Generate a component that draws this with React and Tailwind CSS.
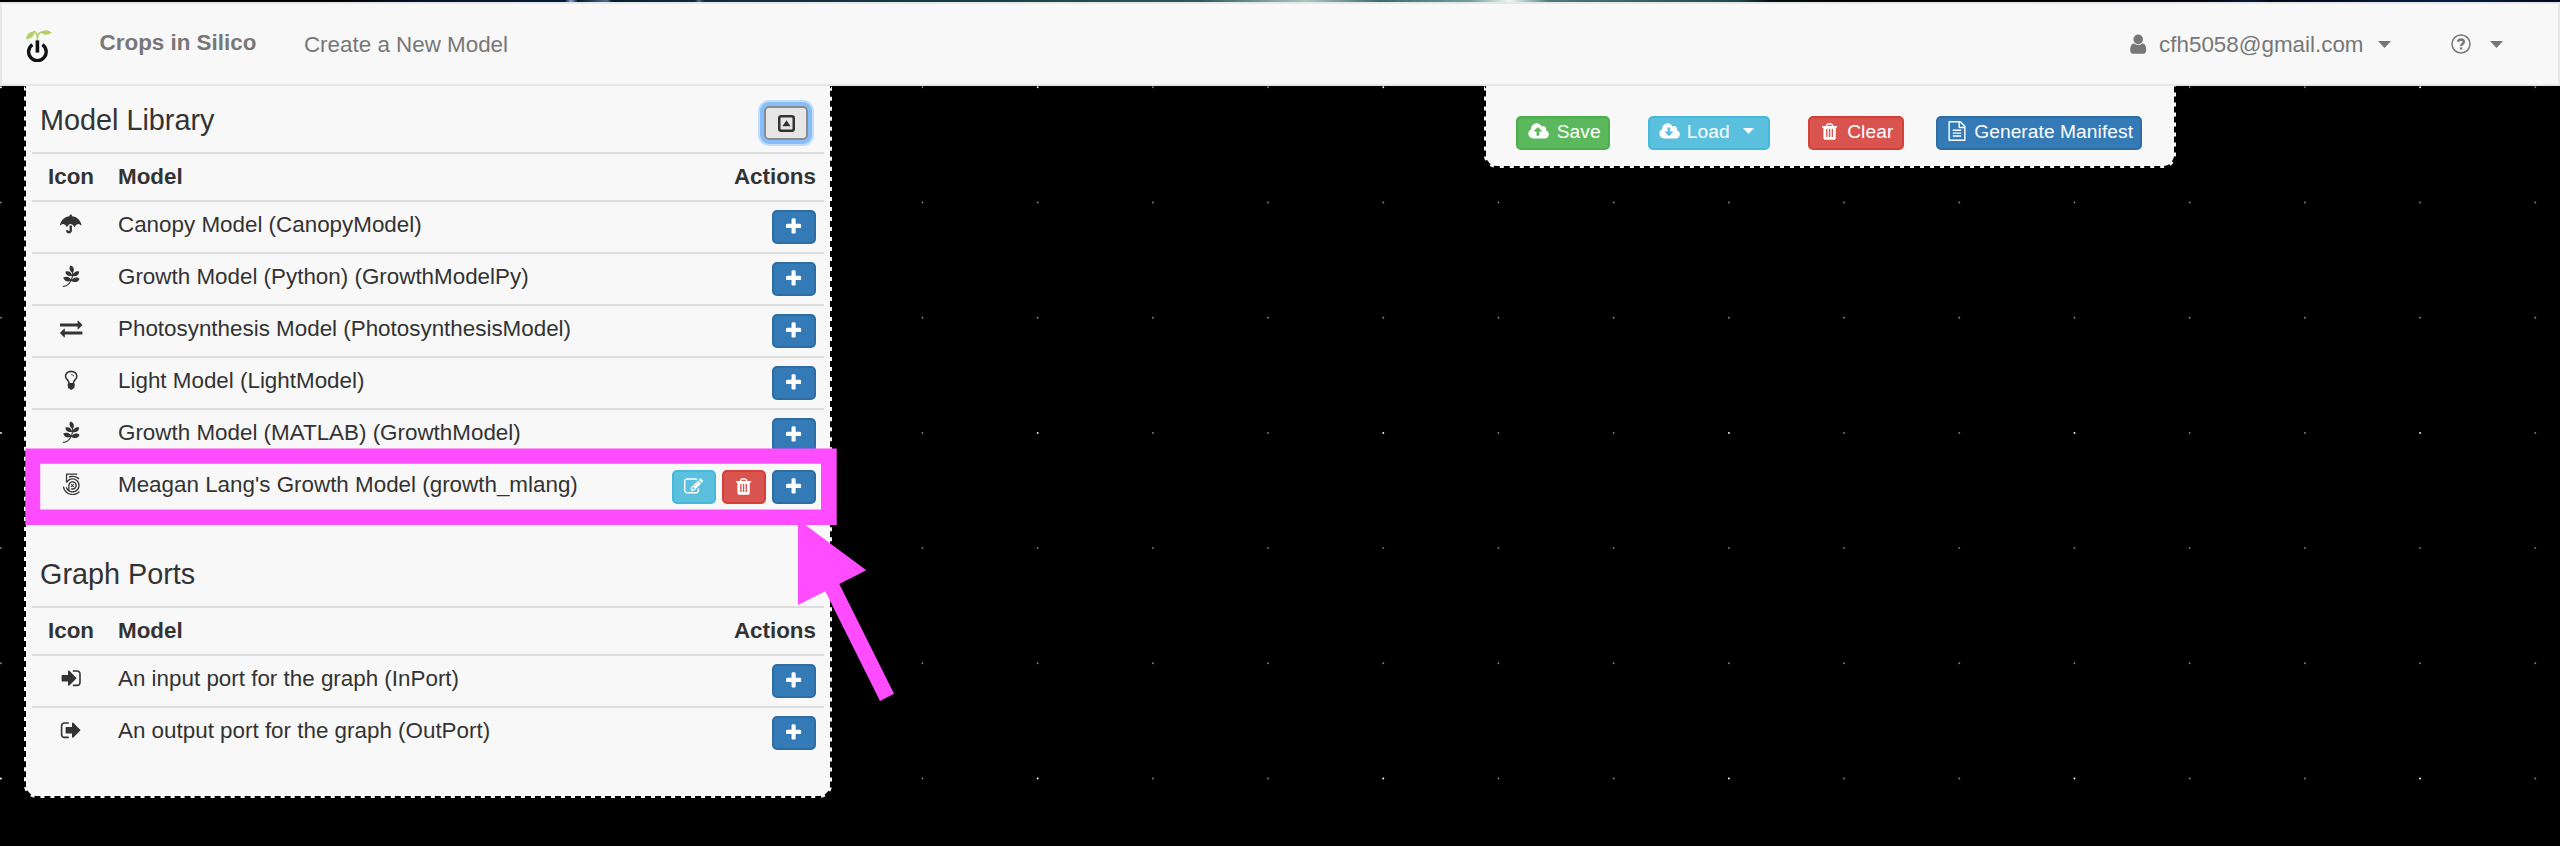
import { Fa500Px, FaPagelines, FaUmbrella } from "react-icons/fa";

const PATHS = {
  plus: "M1600 736v192q0 40-28 68t-68 28h-416v416q0 40-28 68t-68 28h-192q-40 0-68-28t-28-68v-416h-416q-40 0-68-28t-28-68v-192q0-40 28-68t68-28h416v-416q0-40 28-68t68-28h192q40 0 68 28t28 68v416h416q40 0 68 28t28 68z",
  trash: "M704 1376v-704q0-14-9-23t-23-9h-64q-14 0-23 9t-9 23v704q0 14 9 23t23 9h64q14 0 23-9t9-23zm256 0v-704q0-14-9-23t-23-9h-64q-14 0-23 9t-9 23v704q0 14 9 23t23 9h64q14 0 23-9t9-23zm256 0v-704q0-14-9-23t-23-9h-64q-14 0-23 9t-9 23v704q0 14 9 23t23 9h64q14 0 23-9t9-23zm-544-992h448l-48-117q-7-9-17-11h-317q-10 2-17 11zm928 32v64q0 14-9 23t-23 9h-96v948q0 83-47 143.5t-113 60.5h-832q-66 0-113-58.5t-47-141.5v-952h-96q-14 0-23-9t-9-23v-64q0-14 9-23t23-9h309l70-167q15-37 54-63t79-26h320q40 0 79 26t54 63l70 167h309q14 0 23 9t9 23z",
  user: "M1536 1399q0 109-62.5 187t-150.5 78h-854q-88 0-150.5-78t-62.5-187q0-85 8.5-160.5t31.5-152 58.5-131 94-89 134.5-34.5q131 128 313 128t313-128q76 0 134.5 34.5t94 89 58.5 131 31.5 152 8.5 160.5zm-256-887q0 159-112.5 271.5t-271.5 112.5-271.5-112.5-112.5-271.5 112.5-271.5 271.5-112.5 271.5 112.5 112.5 271.5z",
  edit: "M888 1184l116-116-152-152-116 116v56h96v96h56zm440-720q-16-16-33 1l-350 350q-17 17-1 33t33-1l350-350q17-17 1-33zm80 594v190q0 119-84.5 203.5t-203.5 84.5h-832q-119 0-203.5-84.5t-84.5-203.5v-832q0-119 84.5-203.5t203.5-84.5h832q63 0 117 25 15 7 18 23 3 17-9 29l-49 49q-14 14-32 8-23-6-45-6h-832q-66 0-113 47t-47 113v832q0 66 47 113t113 47h832q66 0 113-47t47-113v-126q0-13 9-22l64-64q15-15 35-7t20 29zm-96-738l288 288-672 672h-288v-288zm444 132l-92 92-288-288 92-92q28-28 68-28t68 28l152 152q28 28 28 68t-28 68z",
  file: "M1596 380q28 28 48 76t20 88v1152q0 40-28 68t-68 28h-1344q-40 0-68-28t-28-68v-1600q0-40 28-68t68-28h896q40 0 88 20t76 48zm-444-244v376h376q-10-29-22-41l-313-313q-12-12-41-22zm384 1528v-1024h-416q-40 0-68-28t-28-68v-416h-768v1536h1280zm-1024-864q0-14 9-23t23-9h704q14 0 23 9t9 23v64q0 14-9 23t-23 9h-704q-14 0-23-9t-9-23v-64zm736 224q14 0 23 9t9 23v64q0 14-9 23t-23 9h-704q-14 0-23-9t-9-23v-64q0-14 9-23t23-9h704zm0 256q14 0 23 9t9 23v64q0 14-9 23t-23 9h-704q-14 0-23-9t-9-23v-64q0-14 9-23t23-9h704z",
  exchange: "M1792 1184v192q0 13-9.5 22.5t-22.5 9.5h-1376v192q0 13-9.5 22.5t-22.5 9.5q-12 0-24-10l-319-320q-9-9-9-22 0-14 9-23l320-320q9-9 23-9 13 0 22.5 9.5t9.5 22.5v192h1376q13 0 22.5 9.5t9.5 22.5zm0-544q0 14-9 23l-320 320q-9 9-23 9-13 0-22.5-9.5t-9.5-22.5v-192h-1376q-13 0-22.5-9.5t-9.5-22.5v-192q0-13 9.5-22.5t22.5-9.5h1376v-192q0-14 9-23t23-9q12 0 24 10l319 319q9 9 9 23z",
  signIn: "M1312 896q0 26-19 45l-544 544q-19 19-45 19t-45-19-19-45v-288h-448q-26 0-45-19t-19-45v-384q0-26 19-45t45-19h448v-288q0-26 19-45t45-19 45 19l544 544q19 19 19 45zm352-352v704q0 119-84.5 203.5t-203.5 84.5h-320q-13 0-22.5-9.5t-9.5-22.5q0-4-1-20t-.5-26.5 3-23.5 10-19.5 20.5-6.5h320q66 0 113-47t47-113v-704q0-66-47-113t-113-47h-312l-11.5-1-11.5-3-8-5.5-7-9-2-13.5q0-4-1-20t-.5-26.5 3-23.5 10-19.5 20.5-6.5h320q119 0 203.5 84.5t84.5 203.5z",
  signOut: "M704 1440q0 4 1 20t.5 26.5-3 23.5-10 19.5-20.5 6.5h-320q-119 0-203.5-84.5t-84.5-203.5v-704q0-119 84.5-203.5t203.5-84.5h320q13 0 22.5 9.5t9.5 22.5q0 4 1 20t.5 26.5-3 23.5-10 19.5-20.5 6.5h-320q-66 0-113 47t-47 113v704q0 66 47 113t113 47h312l11.5 1 11.5 3 8 5.5 7 9 2 13.5zm928-544q0 26-19 45l-544 544q-19 19-45 19t-45-19-19-45v-288h-448q-26 0-45-19t-19-45v-384q0-26 19-45t45-19h448v-288q0-26 19-45t45-19 45 19l544 544q19 19 19 45z",
  bulb: "M1120 576q0 13-9.5 22.5t-22.5 9.5-22.5-9.5-9.5-22.5q0-46-54-71t-106-25q-13 0-22.5-9.5t-9.5-22.5 9.5-22.5 22.5-9.5q50 0 99.5 16t87 54 37.5 90zm160 0q0-72-34.5-134t-90-101.5-123-62-136.5-22.5-136.5 22.5-123 62-90 101.5-34.5 134q0 101 68 180 10 11 30.5 33t30.5 33q128 153 141 298h228q13-145 141-298 10-11 30.5-33t30.5-33q68-79 68-180zm128 0q0 155-103 268-45 49-74.5 87t-59.5 95.5-34 107.5q47 28 47 82 0 37-25 64 25 27 25 64 0 52-45 81 13 23 13 47 0 46-31.5 71t-77.5 25q-20 44-60 70t-87 26-87-26-60-70q-46 0-77.5-25t-31.5-71q0-24 13-47-45-29-45-81 0-37 25-64-25-27-25-64 0-54 47-82-4-50-34-107.5t-59.5-95.5-74.5-87q-103-113-103-268 0-99 44.5-184.5t117-142 164-89 186.5-32.5 186.5 32.5 164 89 117 142 44.5 184.5z",
  upload: "M1216 864q0-14-9-23l-352-352q-9-9-23-9t-23 9l-351 351q-10 12-10 24 0 14 9 23t23 9h224v352q0 13 9.5 22.5t22.5 9.5h192q13 0 22.5-9.5t9.5-22.5v-352h224q13 0 22.5-9.5t9.5-22.5zm640 288q0 159-112.5 271.5t-271.5 112.5h-1088q-185 0-316.5-131.5t-131.5-316.5q0-130 70-240t188-165q-2-30-2-43 0-212 150-362t362-150q156 0 285.5 87t188.5 231q71-62 166-62 106 0 181 75t75 181q0 76-41 138 130 31 213.5 135.5t83.5 238.5z",
  download: "M1216 928q0-14-9-23t-23-9h-224v-352q0-13-9.5-22.5t-22.5-9.5h-192q-13 0-22.5 9.5t-9.5 22.5v352h-224q-13 0-22.5 9.5t-9.5 22.5q0 14 9 23l352 352q9 9 23 9t23-9l351-351q10-12 10-24zm640 224q0 159-112.5 271.5t-271.5 112.5h-1088q-185 0-316.5-131.5t-131.5-316.5q0-130 70-240t188-165q-2-30-2-43 0-212 150-362t362-150q156 0 285.5 87t188.5 231q71-62 166-62 106 0 181 75t75 181q0 76-41 138 130 31 213.5 135.5t83.5 238.5z",
};

function Icon({ name, className = "" }) {
  return (
    <svg viewBox="0 0 1792 1792" fill="currentColor" className={`shrink-0 overflow-visible ${className}`}>
      <path d={PATHS[name]} />
    </svg>
  );
}

function Caret({ className = "" }) {
  return (
    <svg viewBox="0 0 13 7" fill="currentColor" className={`shrink-0 ${className}`}>
      <path d="M0 0h13L6.5 7z" />
    </svg>
  );
}

function Logo() {
  return (
    <svg viewBox="0 0 26 32" className="h-8 w-[26px] shrink-0">
      <path d="M11.4 11V6.2Q9.6 1.6 8.4 1.6L6 4" fill="none" stroke="#b5cf66" strokeWidth="1.6" />
      <path d="M11.4 8Q12 2.5 16.5 1.8" fill="none" stroke="#b5cf66" strokeWidth="1.6" />
      <path d="M0 9.5Q0 2 8.8 1.2Q8.5 8 0 9.5z" fill="#b5cf66" />
      <path d="M14.5 2.4Q20-1.8 25.8 2.6Q20 7.2 14.5 2.4z" fill="#b5cf66" />
      <path d="M6.4 14.6A8.8 8.8 0 1 0 16.4 14.6" fill="none" stroke="#111" strokeWidth="3.4" />
      <path d="M11.4 10.4V22.6" stroke="#111" strokeWidth="3.6" />
    </svg>
  );
}

function HelpIcon() {
  return (
    <svg viewBox="0 0 20 20" fill="none" stroke="currentColor" className="size-5 shrink-0">
      <circle cx="10" cy="10" r="9" strokeWidth="1.5" />
      <path d="M7 7.8Q7.6 5.5 10.1 5.5Q12.8 5.6 12.8 7.8Q12.7 9 11.4 9.9Q10.1 10.7 10.1 12.1" strokeWidth="2.4" />
      <path d="M10.1 13.3v2.2" strokeWidth="2.5" />
    </svg>
  );
}

const COLORS = {
  blue: "bg-[#337ab7] border-[#2e6da4]",
  cyan: "bg-[#5bc0de] border-[#46b8da]",
  red: "bg-[#d9534f] border-[#d43f3a]",
  green: "bg-[#5cb85c] border-[#4cae4c]",
};

function ActionButton({ icon, color }) {
  return (
    <button className={`flex h-[34px] w-11 items-center justify-center rounded-[5px] border-2 text-white ${COLORS[color]}`}>
      <Icon name={icon} className="size-[19.2px]" />
    </button>
  );
}

function HeaderRow() {
  return (
    <div className="flex h-12 border-t-2 border-[#ddd] pt-[6px] font-bold leading-[33px]">
      <div className="w-[78px] text-center">Icon</div>
      <div className="flex-1 pl-2">Model</div>
      <div className="pr-2">Actions</div>
    </div>
  );
}

function ModelRow({ icon, label, own }) {
  return (
    <div className="flex h-[52px] border-t-2 border-[#ddd]">
      <div className="flex w-[78px] justify-center pt-[11px]">{icon}</div>
      <div className="flex-1 pl-2 pt-[6px] leading-[33px]">{label}</div>
      <div className="flex gap-[6px] pr-2 pt-2">
        {own && <ActionButton icon="edit" color="cyan" />}
        {own && <ActionButton icon="trash" color="red" />}
        <ActionButton icon="plus" color="blue" />
      </div>
    </div>
  );
}

const ICON_SIZE = "size-[22.4px]";
const MODELS = [
  { icon: <FaUmbrella className="mt-[0.6px] h-[20px] w-[21.5px]" />, label: "Canopy Model (CanopyModel)" },
  { icon: <FaPagelines className={ICON_SIZE} />, label: "Growth Model (Python) (GrowthModelPy)" },
  { icon: <Icon name="exchange" className={ICON_SIZE} />, label: "Photosynthesis Model (PhotosynthesisModel)" },
  { icon: <Icon name="bulb" className={ICON_SIZE} />, label: "Light Model (LightModel)" },
  { icon: <FaPagelines className={ICON_SIZE} />, label: "Growth Model (MATLAB) (GrowthModel)" },
  { icon: <Fa500Px className="-mt-[0.5px] size-[22.6px]" />, label: "Meagan Lang's Growth Model (growth_mlang)", own: true },
];
const PORTS = [
  { icon: <Icon name="signIn" className={ICON_SIZE} />, label: "An input port for the graph (InPort)" },
  { icon: <Icon name="signOut" className={ICON_SIZE} />, label: "An output port for the graph (OutPort)" },
];

const STEP = 115.2;
function GridDots() {
  const dots = [];
  for (let row = 0; row < 7; row++) {
    for (let col = 0; col < 23; col++) {
      const major = col % 3 === 0 && row % 3 === 0;
      dots.push(
        <circle key={`${row}-${col}`} cx={0.9 + col * STEP} cy={1.3 + row * STEP} r="0.95" fill={major ? "#fff" : "#808080"} />
      );
    }
  }
  return (
    <svg width="2560" height="760" className="absolute left-0 top-0">
      {dots}
    </svg>
  );
}

function Navbar() {
  return (
    <nav className="flex h-[84px] items-start border-2 border-[#e7e7e7] bg-[#f8f8f8] text-[22.4px] leading-[33px] text-[#777]">
      <div className="flex pl-6 pt-[26px]">
        <Logo />
      </div>
      <a className="pl-[47.6px] pt-[22px] font-bold">Crops in Silico</a>
      <a className="pl-[47.6px] pt-6">Create a New Model</a>
      <div className="ml-auto flex items-start pr-[55px]">
        <Icon name="user" className="mt-[29px] size-[22.4px]" />
        <span className="pl-[9.2px] pt-6">cfh5058@gmail.com</span>
        <Caret className="ml-[14px] mt-[37px] h-[7px] w-[13px]" />
        <div className="ml-[60.5px] mt-[30px]">
          <HelpIcon />
        </div>
        <Caret className="ml-[19px] mt-[37px] h-[7px] w-[13px]" />
      </div>
    </nav>
  );
}

function ToolButton({ color, className, children }) {
  return (
    <button className={`flex h-[34px] items-start rounded-[5px] border-2 text-[19.2px] leading-[27px] tracking-[0.06px] text-white ${COLORS[color]} ${className}`}>
      {children}
    </button>
  );
}

function Toolbar() {
  return (
    <section className="ml-[652px] flex h-[82px] w-[692px] rounded-b-[13px] border-2 border-t-0 border-dashed border-black bg-[#f8f8f8] pl-[30px] pt-[30px]">
      <ToolButton color="green" className="w-[94px] pl-[10.5px]">
        <Icon name="upload" className="mt-[4px] size-[19.2px]" />
        <span className="pl-[9px]">Save</span>
      </ToolButton>
      <ToolButton color="cyan" className="ml-[38px] w-[122px] pl-[10px]">
        <Icon name="download" className="mt-[4px] size-[19.2px]" />
        <span className="pl-[7.6px]">Load</span>
        <Caret className="ml-[13px] mt-[10px] h-[6px] w-[11px]" />
      </ToolButton>
      <ToolButton color="red" className="ml-[38px] w-24 pl-[10px]">
        <Icon name="trash" className="mt-[4px] size-[19.2px]" />
        <span className="pl-[8px]">Clear</span>
      </ToolButton>
      <ToolButton color="blue" className="ml-8 w-[206px] pl-[9px]">
        <Icon name="file" className="mt-[3px] size-[20px]" />
        <span className="pl-[7.2px] whitespace-nowrap">Generate Manifest</span>
      </ToolButton>
    </section>
  );
}

function Library() {
  return (
    <section className="h-[712px] w-[808px] rounded-b-[13px] border-2 border-t-0 border-dashed border-black bg-[#f8f8f8] px-[6px] text-[22.4px] text-[#333]">
      <div className="flex h-[66px] justify-between pl-2 pr-4">
        <h2 className="pt-[18px] text-[28.8px] leading-8">Model Library</h2>
        <button className="mt-5 flex h-[34px] w-11 items-center justify-center rounded-[5px] border-2 border-[#8c8c8c] bg-[#e6e6e6] shadow-[0_0_0_4px_#86befa,0_0_0_6px_#c3ddf9]">
          <svg viewBox="0 0 17 17" className="size-[17px]">
            <rect x="1.25" y="1.25" width="14.5" height="14.5" rx="2" fill="none" stroke="#333" strokeWidth="2.5" />
            <path d="M4.4 11.2h8.2L8.5 5.2z" fill="#333" />
          </svg>
        </button>
      </div>
      <HeaderRow />
      {MODELS.map((m) => (
        <ModelRow key={m.label} {...m} />
      ))}
      <h2 className="h-[94px] pl-2 pt-[46px] text-[28.8px] leading-8">Graph Ports</h2>
      <HeaderRow />
      {PORTS.map((m) => (
        <ModelRow key={m.label} {...m} />
      ))}
    </section>
  );
}

function Annotation() {
  return (
    <svg width="2560" height="846" className="pointer-events-none absolute left-0 top-0" fill="#ff4cff">
      <path fillRule="evenodd" d="M25.3 448.4H836.7V525H25.3zM40.2 463.7V509.5H821V463.7z" />
      <path d="M798 519.5V605L825.3 591.3L880 701L894 693.7L839.3 584L866.3 570.3z" />
    </svg>
  );
}

export default function App() {
  return (
    <div className="relative h-[846px] w-[2560px] overflow-hidden bg-black font-['Liberation_Sans',Arial,sans-serif]">
      <div className="h-[2px] bg-[linear-gradient(90deg,#000_0px,#000_330px,#04122b_420px,#061a38_565px,#7fa8d8_571px,#06182c_578px,#4b6f8f_607px,#08202e_612px,#0d2c3a_695px,#4a7583_699px,#0d2c3a_704px,#174148_1000px,#2a5a5c_1200px,#a9c8c4_1306px,#3a6b6e_1380px,#6fa0a0_1470px,#eef6f4_1510px,#4a7a7c_1550px,#1d484d_1740px,#041014_1770px,#000_1850px,#01040c_2200px,#06183a_2253px,#020816_2270px,#061c48_2450px,#020a1c_2560px)]" />
      <Navbar />
      <main className="relative flex h-[760px] items-start pl-6">
        <GridDots />
        <div className="relative flex items-start">
          <Library />
          <Toolbar />
        </div>
      </main>
      <Annotation />
    </div>
  );
}
